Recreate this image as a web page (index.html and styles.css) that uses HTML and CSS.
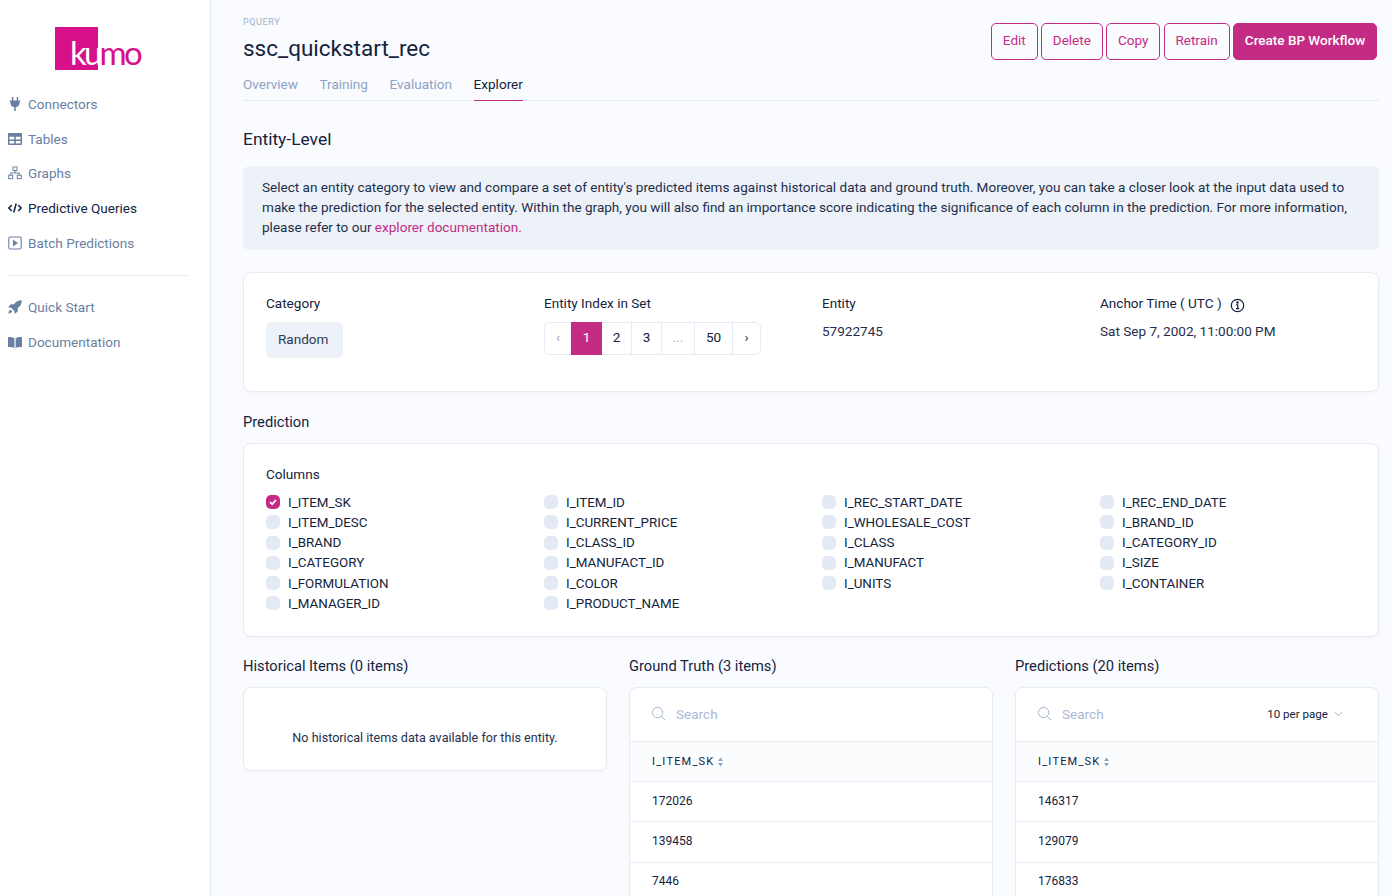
FILE: index.html
```html
<!DOCTYPE html>
<html lang="en">
<head>
    <meta charset="UTF-8">
    <title>ssc_quickstart_rec</title>
    <link rel="stylesheet" href="styles.css">
</head>
<body>
    <aside class="sidebar">
        <div class="logo"><span class="logo-box"></span><span class="logo-text"><span class="logo-ku">ku</span>mo</span></div>
        <nav class="nav">
            <a class="nav-item"><svg class="nav-icon" viewBox="0 0 14 14"><path d="M3.800 0h1.500v3.400H3.800zM8.700 0h1.500v3.400H8.700zM1.800 3.600h10.400v1.100h-.6v1.200c0 2.300-1.500 3.800-3.800 4.200V14H6.200V10.100C3.900 9.700 2.400 8.200 2.400 5.900V4.700h-.6z" fill="currentColor"/></svg>Connectors</a>
            <a class="nav-item"><svg class="nav-icon" viewBox="0 0 14 14"><path fill-rule="evenodd" d="M1 1h12a1 1 0 0 1 1 1v10a1 1 0 0 1-1 1H1a1 1 0 0 1-1-1V2a1 1 0 0 1 1-1zM1.500 4.800v2.800h4.700V4.800zM7.800 4.800v2.800h4.700V4.800zM1.500 9v2.500h4.700V9zM7.800 9v2.500h4.700V9z" fill="currentColor"/></svg>Tables</a>
            <a class="nav-item"><svg class="nav-icon" viewBox="0 0 14 14" fill="none" stroke="currentColor"><rect x="5" y="1" width="4" height="3.500"/><rect x=".7" y="9.200" width="4" height="3.500"/><rect x="9.300" y="9.200" width="4" height="3.500"/><path d="M7 4.500v2.400H2.700v2.300M7 6.900h4.300v2.300"/></svg>Graphs</a>
            <a class="nav-item nav-active"><svg class="nav-icon" viewBox="0 0 14 14" fill="none" stroke="currentColor" stroke-width="1.500"><path d="M3.800 4 .9 7l2.900 3M10.200 4l2.900 3-2.900 3M8.200 2.500 5.800 11.500"/></svg>Predictive Queries</a>
            <a class="nav-item"><svg class="nav-icon" viewBox="0 0 14 14" fill="none" stroke="currentColor" stroke-width="1.100"><rect x=".8" y="1" width="12.400" height="12" rx="1.500"/><path d="M5.500 4.600 9 7l-3.500 2.400z" fill="currentColor"/></svg>Batch Predictions</a>
            <div class="nav-divider"></div>
            <a class="nav-item"><svg class="nav-icon" viewBox="0 0 14 14"><path d="M13.800.2C10.600.2 7.800 1.500 5.900 4.200H2.800L0 7.200l3 .5L6.300 11l.5 3 3-2.800V8.100C12.500 6.200 13.800 3.400 13.800.2zM2.400 9.700C1.200 10.300.6 11.800.5 13.500c1.700-.1 3.200-.7 3.800-1.900z" fill="currentColor"/></svg>Quick Start</a>
            <a class="nav-item"><svg class="nav-icon" viewBox="0 0 14 14"><path d="M0 2.200c2.200-.5 4.500-.2 6.400 1V13C4.500 12 2.200 11.700 0 12.100zM14 2.200c-2.200-.5-4.500-.2-6.400 1V13c1.900-1 4.200-1.300 6.400-.9z" fill="currentColor"/></svg>Documentation</a>
        </nav>
    </aside>

    <main class="main">
        <header class="page-header">
            <div>
                <div class="eyebrow">PQUERY</div>
                <h1 class="title">ssc_quickstart_rec</h1>
            </div>
            <div class="actions">
                <button class="btn">Edit</button>
                <button class="btn">Delete</button>
                <button class="btn">Copy</button>
                <button class="btn">Retrain</button>
                <button class="btn btn-primary">Create BP Workflow</button>
            </div>
        </header>
        <div class="tabs">
            <a class="tab">Overview</a>
            <a class="tab">Training</a>
            <a class="tab">Evaluation</a>
            <a class="tab tab-active">Explorer</a>
        </div>

        <h2 class="entity-heading">Entity-Level</h2>
        <div class="banner">Select an entity category to view and compare a set of entity's predicted items against historical data and ground truth. Moreover, you can take a closer look at the input data used to make the prediction for the selected entity. Within the graph, you will also find an importance score indicating the significance of each column in the prediction. For more information, please refer to our <a class="link">explorer documentation.</a></div>

        <section class="card entity-card">
            <div>
                <div class="field-label">Category</div>
                <span class="chip">Random</span>
            </div>
            <div>
                <div class="field-label">Entity Index in Set</div>
                <div class="pager">
                    <span class="page page-prev">‹</span>
                    <span class="page page-current">1</span>
                    <span class="page page-num">2</span>
                    <span class="page page-num">3</span>
                    <span class="page page-gap">...</span>
                    <span class="page page-last">50</span>
                    <span class="page page-next">›</span>
                </div>
            </div>
            <div>
                <div class="field-label">Entity</div>
                <div class="field-value">57922745</div>
            </div>
            <div>
                <div class="field-label">Anchor Time ( UTC )
                    <svg class="info-icon" viewBox="0 0 16 16" fill="none" stroke="currentColor" stroke-width="1.300"><circle cx="8" cy="8" r="6.600"/><path d="M6.300 7.200H8.200v4M6.300 11.300h3.600" /><circle cx="8" cy="4.800" r=".7" fill="currentColor"/></svg>
                </div>
                <div class="field-value">Sat Sep 7, 2002, 11:00:00 PM</div>
            </div>
        </section>

        <h3 class="section-title prediction-title">Prediction</h3>
        <section class="card columns-card">
            <div class="field-label columns-label">Columns</div>
            <div class="columns-grid">
                <div class="column-list">
                    <label class="check"><span class="box box-on"><svg viewBox="0 0 14 14" fill="none" stroke="#fff" stroke-width="1.800"><path d="M4 7.200 6.100 9.200 10 5"/></svg></span>I_ITEM_SK</label>
                    <label class="check"><span class="box"></span>I_ITEM_DESC</label>
                    <label class="check"><span class="box"></span>I_BRAND</label>
                    <label class="check"><span class="box"></span>I_CATEGORY</label>
                    <label class="check"><span class="box"></span>I_FORMULATION</label>
                    <label class="check"><span class="box"></span>I_MANAGER_ID</label>
                </div>
                <div class="column-list">
                    <label class="check"><span class="box"></span>I_ITEM_ID</label>
                    <label class="check"><span class="box"></span>I_CURRENT_PRICE</label>
                    <label class="check"><span class="box"></span>I_CLASS_ID</label>
                    <label class="check"><span class="box"></span>I_MANUFACT_ID</label>
                    <label class="check"><span class="box"></span>I_COLOR</label>
                    <label class="check"><span class="box"></span>I_PRODUCT_NAME</label>
                </div>
                <div class="column-list">
                    <label class="check"><span class="box"></span>I_REC_START_DATE</label>
                    <label class="check"><span class="box"></span>I_WHOLESALE_COST</label>
                    <label class="check"><span class="box"></span>I_CLASS</label>
                    <label class="check"><span class="box"></span>I_MANUFACT</label>
                    <label class="check"><span class="box"></span>I_UNITS</label>
                </div>
                <div class="column-list">
                    <label class="check"><span class="box"></span>I_REC_END_DATE</label>
                    <label class="check"><span class="box"></span>I_BRAND_ID</label>
                    <label class="check"><span class="box"></span>I_CATEGORY_ID</label>
                    <label class="check"><span class="box"></span>I_SIZE</label>
                    <label class="check"><span class="box"></span>I_CONTAINER</label>
                </div>
            </div>
        </section>

        <div class="results">
            <div>
                <h3 class="section-title">Historical Items (0 items)</h3>
                <div class="card empty-card">No historical items data available for this entity.</div>
            </div>
            <div>
                <h3 class="section-title">Ground Truth (3 items)</h3>
                <div class="card table-card">
                    <div class="search-row">
                        <svg class="search-icon" viewBox="0 0 16 16" fill="none" stroke="currentColor"><circle cx="7" cy="7" r="5.500"/><path d="m11 11 4 4"/></svg>
                        <span class="search-text">Search</span>
                    </div>
                    <div class="table-head">I_ITEM_SK<svg class="sort-icon" viewBox="0 0 6 10"><path d="M3 .5 5.500 4H.5zM3 9.500.5 6h5z" fill="currentColor"/></svg></div>
                    <div class="table-row">172026</div>
                    <div class="table-row">139458</div>
                    <div class="table-row">7446</div>
                </div>
            </div>
            <div>
                <h3 class="section-title">Predictions (20 items)</h3>
                <div class="card table-card">
                    <div class="search-row">
                        <svg class="search-icon" viewBox="0 0 16 16" fill="none" stroke="currentColor"><circle cx="7" cy="7" r="5.500"/><path d="m11 11 4 4"/></svg>
                        <span class="search-text">Search</span>
                        <span class="per-page">10 per page<svg class="chevron" viewBox="0 0 10 6" fill="none" stroke="currentColor"><path d="m1 1 4 4 4-4"/></svg></span>
                    </div>
                    <div class="table-head">I_ITEM_SK<svg class="sort-icon" viewBox="0 0 6 10"><path d="M3 .5 5.500 4H.5zM3 9.500.5 6h5z" fill="currentColor"/></svg></div>
                    <div class="table-row">146317</div>
                    <div class="table-row">129079</div>
                    <div class="table-row">176833</div>
                </div>
            </div>
        </div>
    </main>
</body>
</html>
```

FILE: styles.css
```css
* {
    box-sizing: border-box;
}
html, body {
    height: 100%;
}
body {
    margin: 0;
    display: flex;
    height: 896px;
    overflow: hidden;
    font-family: Roboto, sans-serif;
    font-size: 13.550px;
    color: #14233d;
    background-color: #fafbfe;
}

/* sidebar */
.sidebar {
    flex: 0 0 211px;
    background: #fff;
    border-right: 1px solid #e6ebf3;
    padding: 27px 22px 0 8px;
}
.logo {
    display: flex;
    position: relative;
    height: 43px;
    margin-left: 47px;
}
.logo-box {
    width: 43px;
    height: 43px;
    background: #d6118a;
}
.logo-text {
    position: absolute;
    left: 15px;
    top: 6px;
    font-family: Lato, sans-serif;
    font-weight: 400;
    font-size: 33px;
    line-height: 38px;
    letter-spacing: -2.800px;
    color: #d6118a;
}
.logo-ku {
    color: #fff;
}
.nav {
    margin-top: 16.500px;
}
.nav-item {
    display: flex;
    align-items: center;
    gap: 6px;
    height: 34.700px;
    color: #6a80a3;
}
.nav-active {
    color: #14233d;
}
.nav-icon {
    width: 14px;
    height: 14px;
    flex: none;
}
.nav-divider {
    height: 1px;
    background: #e6ebf3;
    margin: 15px 0 14px;
}

/* header */
.main {
    flex: 1;
    min-width: 0;
    padding: 0 14px 0 32px;
}
.page-header {
    display: flex;
    justify-content: space-between;
    padding-right: 2px;
}
.eyebrow {
    margin-top: 16px;
    font-size: 9px;
    line-height: 12px;
    letter-spacing: 0.6px;
    color: #9db0cf;
}
.title {
    margin: 5px 0 0;
    font-size: 22.500px;
    line-height: 30px;
    font-weight: 400;
}
.actions {
    display: flex;
    gap: 3.500px;
    margin-top: 23px;
    height: 37px;
}
.btn {
    height: 37px;
    padding: 0 10.800px 4px;
    font-family: inherit;
    font-size: 13.500px;
    color: #c42b84;
    background: transparent;
    border: 1px solid #c42b84;
    border-radius: 5px;
}
.btn-primary {
    font-weight: 500;
    color: #fff;
    background: #c42b84;
}
.tabs {
    display: flex;
    gap: 21.600px;
    height: 27px;
    margin-top: 11px;
    border-bottom: 1px solid #e4ebf7;
}
.tab {
    height: 27px;
    line-height: 20px;
    color: #8ea3c6;
}
.tab-active {
    color: #14233d;
    border-bottom: 1px solid #c42b84;
}

/* entity */
.entity-heading {
    margin: 27px 0 16px;
    font-size: 17.400px;
    line-height: 22px;
    font-weight: 400;
}
.banner {
    height: 84px;
    padding: 11px 19px;
    line-height: 20px;
    color: #1f2f4a;
    background: #edf2f9;
    border-radius: 6px;
}
.link {
    color: #c42b84;
}
.card {
    background: #fff;
    border: 1px solid #e6ebf4;
    border-radius: 8px;
    box-shadow: 0 1px 3px rgba(60, 80, 120, 0.04);
}
.entity-card {
    display: grid;
    grid-template-columns: repeat(4, 1fr);
    gap: 22px;
    height: 120px;
    margin-top: 22px;
    padding: 22px;
}
.field-label {
    display: flex;
    align-items: center;
    gap: 8px;
    height: 17px;
    line-height: 17px;
}
.field-value {
    margin-top: 11px;
    line-height: 17px;
    color: #1f2f4a;
}
.chip {
    display: inline-block;
    height: 36px;
    margin-top: 10px;
    padding: 0 15px 0 12px;
    line-height: 35px;
    color: #2b3b55;
    background: #edf2f9;
    border-radius: 5px;
}
.info-icon {
    width: 15px;
    height: 15px;
    margin-top: 3px;
}
.pager {
    display: flex;
    height: 33px;
    margin-top: 10px;
    width: 217px;
    border: 1px solid #e4ebf7;
    border-radius: 5px;
}
.page {
    display: flex;
    align-items: center;
    justify-content: center;
    margin: -1px 0;
    padding-bottom: 4px;
    border-right: 1px solid #e4ebf7;
}
.page-prev {
    width: 26px;
    color: #8ea3c6;
    border-right: 0;
}
.page-current {
    width: 31px;
    color: #fff;
    background: #c42b84;
    border-right: 0;
}
.page-num {
    width: 30px;
}
.page-gap {
    width: 33px;
    color: #9db0cf;
}
.page-last {
    width: 38px;
}
.page-next {
    flex: 1;
    border-right: 0;
}
.section-title {
    margin: 0 0 10px;
    font-size: 14.700px;
    line-height: 22px;
    font-weight: 400;
}
.prediction-title {
    margin-top: 19px;
}
.columns-card {
    height: 194px;
    padding: 22px;
}
.columns-grid {
    display: grid;
    grid-template-columns: repeat(4, 1fr);
    gap: 22px;
    margin-top: 9px;
}
.check {
    display: flex;
    align-items: center;
    gap: 8px;
    height: 20.250px;
    font-size: 13.400px;
}
.box {
    width: 14px;
    height: 14px;
    background: #e3eaf6;
    border-radius: 5px;
}
.box svg {
    display: block;
}
.box-on {
    background: #c42b84;
}

/* bottom tables */
.results {
    display: grid;
    grid-template-columns: repeat(3, 364px);
    gap: 22px;
    margin-top: 18px;
}
.empty-card {
    height: 84px;
    padding-top: 41px;
    font-size: 12.600px;
    line-height: 17px;
    text-align: center;
    color: #1f2f4a;
}
.search-row {
    display: flex;
    align-items: center;
    height: 54px;
    padding: 0 21px 2px;
    border-bottom: 1px solid #e6ebf4;
}
.search-icon {
    width: 15px;
    height: 15px;
    color: #9db0cf;
}
.search-text {
    margin-left: 10px;
    color: #a9bad6;
}
.per-page {
    display: flex;
    align-items: center;
    gap: 6px;
    margin-left: auto;
    margin-right: 14px;
    font-size: 11.600px;
}
.chevron {
    width: 9px;
    height: 6px;
    color: #8ea3c6;
}
.table-head {
    display: flex;
    align-items: center;
    gap: 3px;
    height: 40px;
    padding: 0 22px;
    font-size: 11px;
    letter-spacing: 1.200px;
    background: #fbfcfe;
    border-bottom: 1px solid #e6ebf4;
}
.sort-icon {
    width: 7px;
    height: 10px;
    color: #8ea3c6;
}
.table-row {
    display: flex;
    align-items: center;
    height: 40.300px;
    padding: 0 22px 2px;
    font-size: 12px;
    border-bottom: 1px solid #e6ebf4;
}
```
